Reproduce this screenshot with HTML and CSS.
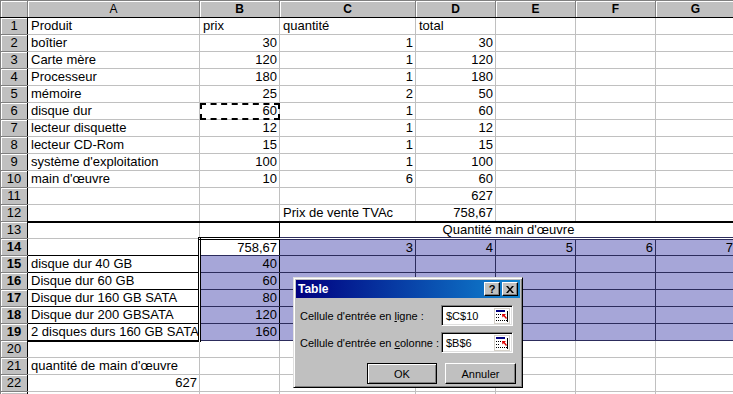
FILE: index.html
```html
<!DOCTYPE html>
<html lang="fr">
<head>
    <meta charset="UTF-8">
    <meta name="viewport" content="width=device-width, initial-scale=1.0">
    <title>Table</title>
    <link rel="stylesheet" href="styles.css">
</head>
<body>
<div class="sheet">
    <table class="grid">
        <colgroup>
            <col class="c-rh"><col class="c-a"><col class="c-b"><col class="c-c">
            <col class="c-n"><col class="c-n"><col class="c-n"><col class="c-n">
        </colgroup>
        <tr class="head">
            <th class="corner"></th><th>A</th><th class="sel">B</th><th class="sel">C</th>
            <th class="sel">D</th><th class="sel">E</th><th class="sel">F</th><th class="sel">G</th>
        </tr>
        <tr><th>1</th><td>Produit</td><td>prix</td><td>quantité</td><td>total</td><td></td><td></td><td></td></tr>
        <tr><th>2</th><td>boîtier</td><td class="n">30</td><td class="n">1</td><td class="n">30</td><td></td><td></td><td></td></tr>
        <tr><th>3</th><td>Carte mère</td><td class="n">120</td><td class="n">1</td><td class="n">120</td><td></td><td></td><td></td></tr>
        <tr><th>4</th><td>Processeur</td><td class="n">180</td><td class="n">1</td><td class="n">180</td><td></td><td></td><td></td></tr>
        <tr><th>5</th><td>mémoire</td><td class="n">25</td><td class="n">2</td><td class="n">50</td><td></td><td></td><td></td></tr>
        <tr><th>6</th><td>disque dur</td><td class="n copy">60</td><td class="n">1</td><td class="n">60</td><td></td><td></td><td></td></tr>
        <tr><th>7</th><td>lecteur disquette</td><td class="n">12</td><td class="n">1</td><td class="n">12</td><td></td><td></td><td></td></tr>
        <tr><th>8</th><td>lecteur CD-Rom</td><td class="n">15</td><td class="n">1</td><td class="n">15</td><td></td><td></td><td></td></tr>
        <tr><th>9</th><td>système d'exploitation</td><td class="n">100</td><td class="n">1</td><td class="n">100</td><td></td><td></td><td></td></tr>
        <tr><th>10</th><td>main d'œuvre</td><td class="n">10</td><td class="n">6</td><td class="n">60</td><td></td><td></td><td></td></tr>
        <tr><th>11</th><td></td><td></td><td></td><td class="n">627</td><td></td><td></td><td></td></tr>
        <tr class="r12"><th>12</th><td></td><td></td><td>Prix de vente TVAc</td><td class="n">758,67</td><td></td><td></td><td></td></tr>
        <tr><th>13</th><td></td><td class="box13"></td><td class="merged" colspan="5">Quantité main d'œuvre</td></tr>
        <tr class="r14">
            <th class="sel">14</th><td class="bx"></td><td class="n start">758,67</td>
            <td class="n hl">3</td><td class="n hl">4</td><td class="n hl">5</td><td class="n hl">6</td><td class="n hl">7</td>
        </tr>
        <tr><th class="sel">15</th><td class="bx">disque dur 40 GB</td><td class="n hl colb">40</td><td class="hl"></td><td class="hl"></td><td class="hl"></td><td class="hl"></td><td class="hl"></td></tr>
        <tr><th class="sel">16</th><td class="bx">Disque dur 60 GB</td><td class="n hl colb">60</td><td class="hl"></td><td class="hl"></td><td class="hl"></td><td class="hl"></td><td class="hl"></td></tr>
        <tr><th class="sel">17</th><td class="bx">Disque dur 160 GB SATA</td><td class="n hl colb">80</td><td class="hl"></td><td class="hl"></td><td class="hl"></td><td class="hl"></td><td class="hl"></td></tr>
        <tr><th class="sel">18</th><td class="bx">Disque dur 200 GBSATA</td><td class="n hl colb">120</td><td class="hl"></td><td class="hl"></td><td class="hl"></td><td class="hl"></td><td class="hl"></td></tr>
        <tr class="r19"><th class="sel">19</th><td class="bx">2 disques durs 160 GB SATA</td><td class="n hl colb">160</td><td class="hl"></td><td class="hl"></td><td class="hl"></td><td class="hl"></td><td class="hl"></td></tr>
        <tr><th>20</th><td></td><td></td><td></td><td></td><td></td><td></td><td></td></tr>
        <tr><th>21</th><td>quantité de main d'œuvre</td><td></td><td></td><td></td><td></td><td></td><td></td></tr>
        <tr><th>22</th><td class="n">627</td><td></td><td></td><td></td><td></td><td></td><td></td></tr>
        <tr><th></th><td></td><td></td><td></td><td></td><td></td><td></td><td></td></tr>
    </table>

    <div class="dlg">
        <div class="dlg-title">
            <span>Table</span>
            <div class="tbtns">
                <div class="tb">?</div>
                <div class="tb">
                    <svg width="8" height="7" viewBox="0 0 8 7"><path d="M0 0h2l2 2.5 2-2.5h2l-3 3.5 3 3.5h-2l-2-2.5-2 2.5h-2l3-3.5z" fill="#000"/></svg>
                </div>
            </div>
        </div>
        <div class="dlg-body">
            <div class="field">
                <label>Cellule d'entrée en <u>l</u>igne :</label>
                <div class="ref">
                    <span>$C$10</span>
                    <svg class="refbtn" width="16" height="16" viewBox="0 0 16 16">
                        <rect x="0" y="0" width="16" height="16" fill="#d4d0c8"/>
                        <rect x="1" y="1" width="14" height="14" fill="#fff"/>
                        <rect x="2" y="2" width="9" height="2" fill="#000080"/>
                        <path d="M2 6.5h5M2 9.5h4M2 12.5h11" stroke="#000" stroke-dasharray="1 1"/>
                        <path d="M13.5 3v11" stroke="#000"/>
                        <path d="M8 6h4l-1.3 1.3 2.3 2.7-1 1-2.3-2.7L8.4 9.6z" fill="#e00000"/>
                    </svg>
                </div>
            </div>
            <div class="field">
                <label>Cellule d'entrée en <u>c</u>olonne :</label>
                <div class="ref">
                    <span>$B$6</span>
                    <svg class="refbtn" width="16" height="16" viewBox="0 0 16 16">
                        <rect x="0" y="0" width="16" height="16" fill="#d4d0c8"/>
                        <rect x="1" y="1" width="14" height="14" fill="#fff"/>
                        <rect x="2" y="2" width="9" height="2" fill="#000080"/>
                        <path d="M2 6.5h5M2 9.5h4M2 12.5h11" stroke="#000" stroke-dasharray="1 1"/>
                        <path d="M13.5 3v11" stroke="#000"/>
                        <path d="M8 6h4l-1.3 1.3 2.3 2.7-1 1-2.3-2.7L8.4 9.6z" fill="#e00000"/>
                    </svg>
                </div>
            </div>
            <div class="actions">
                <button class="btn def">OK</button>
                <button class="btn">Annuler</button>
            </div>
        </div>
    </div>
</div>
</body>
</html>
```

FILE: styles.css
```css
body {
    margin: 0;
    background-color: #fff;
    overflow: hidden;
    font-family: "Liberation Sans", Arial, sans-serif;
}
.sheet {
    position: relative;
    width: 733px;
    height: 394px;
    overflow: hidden;
}
.grid {
    border-collapse: collapse;
    table-layout: fixed;
    width: 735px;
    font-size: 13px;
    color: #000;
}
.c-rh { width: 27px; }
.c-a { width: 172px; }
.c-b { width: 80px; }
.c-c { width: 136px; }
.c-n { width: 80px; }
.grid tr {
    height: 17px;
}
.grid td {
    border: 1px solid #c0c0c0;
    padding: 0 2px 0 3px;
    line-height: 14px;
    white-space: nowrap;
    overflow: hidden;
}
.grid th {
    background-color: #c0c0c0;
    border: 1px solid #808080;
    border-right-color: #000;
    box-shadow: inset 1px 1px 0 #fff;
    font-weight: normal;
    font-size: 13px;
    line-height: 14px;
    padding: 0;
    text-align: center;
}
.grid .head th {
    font-size: 12px;
    border-bottom-color: #000;
    border-right-color: #808080;
}
.grid th.sel {
    font-weight: bold;
}
.grid td.n {
    text-align: right;
    padding: 0 2px 0 2px;
}
.grid td.copy {
    outline: 2px dashed #000;
    outline-offset: -2px;
}
.r12 td {
    border-bottom: 2px solid #000;
}
.grid td.box13 {
    border-left-color: #000;
    border-right-color: #000;
}
.grid td.merged {
    text-align: center;
    padding-left: 4px;
}
.grid td.bx {
    border-color: #000;
}
.r14 td.start,
.r14 td.hl {
    border-top: 3px double #000;
}
.grid td.start {
    border-left: 3px double #000;
    border-right-color: #000;
    border-bottom-color: #2c2c5c;
}
.grid td.hl {
    background-color: #a6a6d8;
    border-color: #2c2c5c;
}
.grid td.colb {
    border-left: 3px double #000;
    border-right-color: #000;
}
.r19 td.bx {
    border-bottom: 2px solid #000;
}

/* dialog */
.dlg {
    position: absolute;
    left: 293px;
    top: 277px;
    width: 230px;
    box-sizing: border-box;
    background-color: #c0c0c0;
    border: 1px solid;
    border-color: #dfdfdf #000 #000 #dfdfdf;
    box-shadow: inset 1px 1px 0 #fff, inset -1px -1px 0 #808080;
    padding: 2px;
    font-size: 11px;
    color: #000;
}
.dlg-title {
    height: 18px;
    background: linear-gradient(to right, #000080, #1084d0);
    display: flex;
    align-items: center;
    justify-content: space-between;
    padding: 0 2px 0 2px;
    color: #fff;
    font-weight: bold;
    font-size: 12px;
}
.tbtns {
    display: flex;
    gap: 2px;
}
.tb {
    width: 14px;
    height: 12px;
    background-color: #c0c0c0;
    border: 1px solid;
    border-color: #fff #000 #000 #fff;
    box-shadow: inset -1px -1px 0 #808080;
    color: #000;
    font-size: 11px;
    line-height: 12px;
    text-align: center;
    display: flex;
    align-items: center;
    justify-content: center;
}
.dlg-body {
    padding: 7px 4px 1px 4px;
}
.field {
    display: flex;
    align-items: center;
    justify-content: space-between;
    height: 21px;
    margin-right: 3px;
    margin-bottom: 6px;
}
.ref {
    width: 72px;
    height: 21px;
    box-sizing: border-box;
    background-color: #fff;
    border: 1px solid;
    border-color: #808080 #fff #fff #808080;
    box-shadow: inset 1px 1px 0 #000, inset -1px -1px 0 #dfdfdf;
    display: flex;
    align-items: center;
    justify-content: space-between;
    padding: 0 2px 0 4px;
}
.refbtn {
    display: block;
}
.actions {
    display: flex;
    justify-content: flex-end;
    gap: 8px;
    margin-top: 10px;
}
.btn {
    width: 71px;
    height: 21px;
    background-color: #c0c0c0;
    border: 1px solid;
    border-color: #fff #000 #000 #fff;
    box-shadow: inset -1px -1px 0 #808080;
    font-family: "Liberation Sans", Arial, sans-serif;
    font-size: 11px;
    color: #000;
    padding: 0;
}
.btn.def {
    width: 70px;
    border-color: #000;
    box-shadow: inset 1px 1px 0 #fff, inset -1px -1px 0 #808080;
}
```
